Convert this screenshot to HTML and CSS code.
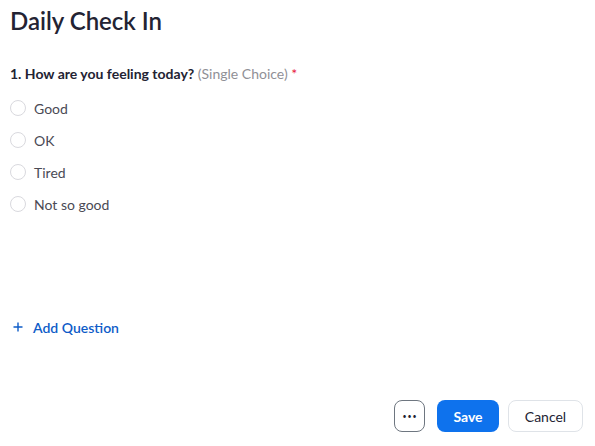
FILE: index.html
```html
<!DOCTYPE html>
<html>
<head>
<meta charset="utf-8">
<link rel="stylesheet" href="styles.css">
</head>
<body>
<div class="page">
  <h1 class="title">Daily Check In</h1>
  <div class="question">
    <div class="q-label"><span class="q-text">1. How are you feeling today?</span> <span class="q-type">(Single Choice)</span> <span class="req">*</span></div>
    <ul class="options">
      <li class="option"><span class="radio"></span><span class="opt-text">Good</span></li>
      <li class="option"><span class="radio"></span><span class="opt-text">OK</span></li>
      <li class="option"><span class="radio"></span><span class="opt-text">Tired</span></li>
      <li class="option"><span class="radio"></span><span class="opt-text">Not so good</span></li>
    </ul>
  </div>
  <div class="add">
    <svg class="plus" width="10" height="10" viewBox="0 0 10 10"><path d="M5 0.5V9.5M0.5 5H9.5" stroke="#0e5cc8" stroke-width="1.4" fill="none"/></svg>
    <span class="add-text">Add Question</span>
  </div>
  <div class="footer">
    <button class="btn more"><span class="dots">•••</span></button>
    <button class="btn save">Save</button>
    <button class="btn cancel">Cancel</button>
  </div>
</div>
</body>
</html>
```
FILE: styles.css
```css
html, body {
  margin: 0;
  padding: 0;
  background: #fff;
}
body {
  font-family: Lato, "Open Sans", sans-serif;
  color: #232333;
  width: 595px;
  height: 446px;
  overflow: hidden;
}
.page {
  display: flex;
  flex-direction: column;
  height: 446px;
  padding: 0 12px 0 10px;
  box-sizing: border-box;
}
.title {
  margin: 6px 0 0 0;
  font-size: 24px;
  font-weight: 600;
  line-height: 30px;
  color: #232333;
}
.question {
  margin-top: 29px;
}
.q-label {
  font-size: 14px;
  line-height: 18px;
}
.q-text {
  font-weight: 700;
  color: #232333;
}
.q-type {
  color: #909096;
}
.req {
  color: #e8173d;
}
.options {
  list-style: none;
  margin: 15px 0 0 0;
  padding: 0;
  display: flex;
  flex-direction: column;
  gap: 12px;
}
.option {
  display: flex;
  align-items: center;
  height: 20px;
  font-size: 14px;
  color: #4a4a55;
}
.radio {
  width: 14px;
  height: 14px;
  border: 1px solid #d9d9de;
  border-radius: 50%;
  margin-right: 8px;
  box-sizing: content-box;
}
.add {
  margin-top: 103px;
  display: flex;
  align-items: center;
  padding-left: 3px;
  color: #0e5cc8;
  font-size: 14px;
  font-weight: 600;
  height: 20px;
}
.plus {
  margin-right: 10px;
}
.footer {
  margin-top: auto;
  margin-bottom: 14px;
  display: flex;
  justify-content: flex-end;
}
.btn {
  height: 32px;
  border-radius: 8px;
  font-family: Lato, "Open Sans", sans-serif;
  font-size: 14px;
  box-sizing: border-box;
  cursor: pointer;
}
.more {
  width: 31px;
  border: 1px solid #6e7680;
  background: #fff;
  padding: 0;
  display: flex;
  align-items: center;
  justify-content: center;
  margin-right: 12px;
}
.dots {
  font-size: 7px;
  letter-spacing: 1px;
  color: #232333;
  margin-left: 1px;
}
.save {
  width: 62px;
  background: #0e72ed;
  border: none;
  color: #fff;
  font-weight: 700;
  margin-right: 9px;
}
.cancel {
  width: 75px;
  background: #fff;
  border: 1px solid #dfe3e8;
  color: #232333;
}
```
